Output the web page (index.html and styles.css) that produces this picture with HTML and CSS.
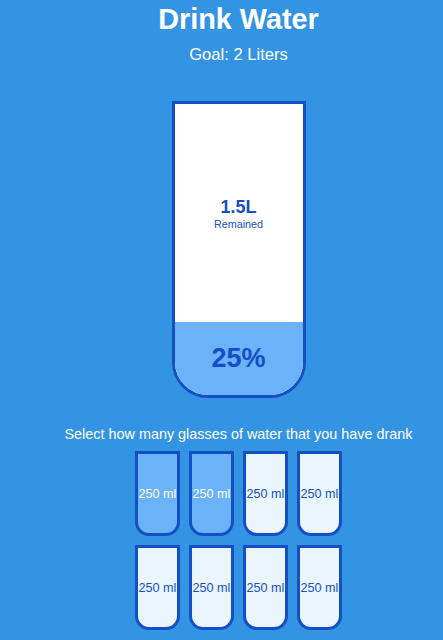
FILE: index.html
```html
<!DOCTYPE html>
<html lang="en">
<head>
<meta charset="UTF-8">
<title>Drink Water</title>
<link rel="stylesheet" href="styles.css">
</head>
<body>
  <main class="app">
    <h1 class="title">Drink Water</h1>
    <h3 class="goal">Goal: 2 Liters</h3>

    <div class="cup">
      <div class="remained">
        <span class="remained-value">1.5L</span>
        <small class="remained-label">Remained</small>
      </div>
      <div class="percentage" style="height: 25%;">25%</div>
    </div>

    <p class="text">Select how many glasses of water that you have drank</p>

    <div class="cups">
      <div class="cup-small full">250 ml</div>
      <div class="cup-small full">250 ml</div>
      <div class="cup-small">250 ml</div>
      <div class="cup-small">250 ml</div>
      <div class="cup-small">250 ml</div>
      <div class="cup-small">250 ml</div>
      <div class="cup-small">250 ml</div>
      <div class="cup-small">250 ml</div>
    </div>
  </main>
</body>
</html>
```

FILE: styles.css
```css
* {
  box-sizing: border-box;
}

html {
  overflow: hidden;
}

body {
  margin: 0;
  background-color: #3494e4;
  color: #fff;
  font-family: "Liberation Sans", Arial, sans-serif;
}

.app {
  display: flex;
  flex-direction: column;
  align-items: center;
  padding-left: 34px;
}

.title {
  margin: 3px 0 0;
  font-size: 28.8px;
  font-weight: bold;
  line-height: normal;
}

.goal {
  margin: 9px 0 9px;
  font-size: 16.6px;
  font-weight: 400;
  line-height: normal;
}

.cup {
  width: 134px;
  height: 297px;
  margin: 27px 0;
  background-color: #fff;
  border: 3px solid #144fc6;
  border-radius: 0 0 36px 36px;
  color: #144fc6;
  display: flex;
  flex-direction: column;
  overflow: hidden;
}

.remained {
  flex: 1;
  display: flex;
  flex-direction: column;
  align-items: center;
  justify-content: center;
  text-align: center;
}

.remained-value {
  font-size: 18px;
  font-weight: bold;
}

.remained-label {
  font-size: 10.8px;
}

.percentage {
  background-color: #6ab3f8;
  display: flex;
  align-items: center;
  justify-content: center;
  font-size: 27px;
  font-weight: bold;
}

.text {
  margin: 1px 0 5px;
  font-size: 14.4px;
  text-align: center;
  line-height: normal;
}

.cups {
  display: flex;
  flex-wrap: wrap;
  justify-content: center;
  gap: 9px;
  width: 207px;
  margin-top: 4px;
}

.cup-small {
  width: 45px;
  height: 85px;
  border: 3px solid #144fc6;
  border-radius: 0 0 14px 14px;
  background-color: rgba(255, 255, 255, 0.9);
  color: #144fc6;
  font-size: 12.6px;
  display: flex;
  align-items: center;
  justify-content: center;
  text-align: center;
  white-space: nowrap;
}

.cup-small.full {
  background-color: #6ab3f8;
  color: #fff;
}
```
